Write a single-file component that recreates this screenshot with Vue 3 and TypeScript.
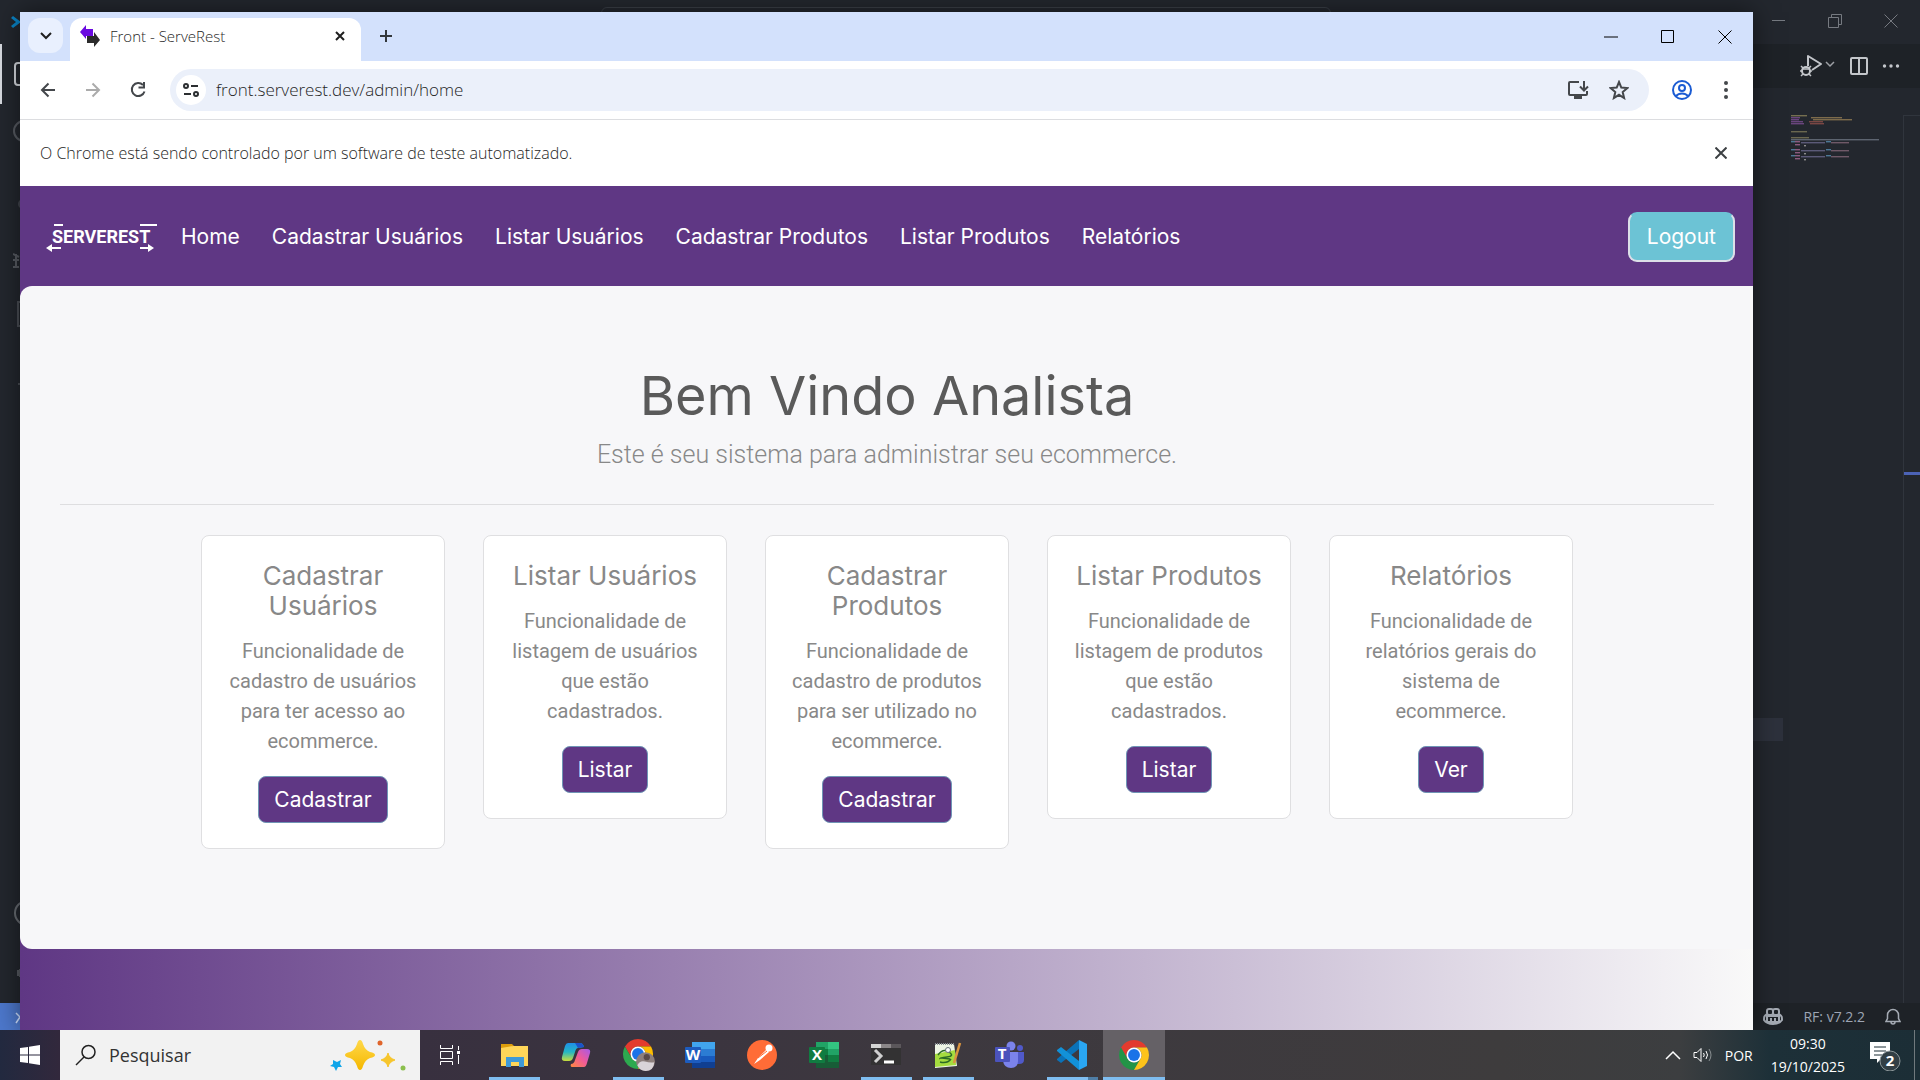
<script setup lang="ts">
import { ref } from 'vue'

interface Card {
  title: string
  text: string
  action: string
}

interface Mark {
  x: number
  y: number
  w: number
  c: string
}

const address = ref('front.serverest.dev/admin/home')
const query = ref('')

const links: string[] = [
  'Home',
  'Cadastrar Usuários',
  'Listar Usuários',
  'Cadastrar Produtos',
  'Listar Produtos',
  'Relatórios',
]

const cards: Card[] = [
  { title: 'Cadastrar Usuários', text: 'Funcionalidade de cadastro de usuários para ter acesso ao ecommerce.', action: 'Cadastrar' },
  { title: 'Listar Usuários', text: 'Funcionalidade de listagem de usuários que estão cadastrados.', action: 'Listar' },
  { title: 'Cadastrar Produtos', text: 'Funcionalidade de cadastro de produtos para ser utilizado no ecommerce.', action: 'Cadastrar' },
  { title: 'Listar Produtos', text: 'Funcionalidade de listagem de produtos que estão cadastrados.', action: 'Listar' },
  { title: 'Relatórios', text: 'Funcionalidade de relatórios gerais do sistema de ecommerce.', action: 'Ver' },
]

const block = (y: number): Mark[] => [
  { x: 0, y, w: 4, c: '#4d7896' },
  { x: 4, y, w: 5, c: '#8b5a80' },
  { x: 10, y: y + 1, w: 24, c: '#5b5a78' },
  { x: 35, y, w: 5, c: '#4d7896' },
  { x: 40, y: y + 1, w: 18, c: '#6f5968' },
  { x: 4, y: y + 3, w: 5, c: '#8b5a80' },
  { x: 13, y: y + 4, w: 2, c: '#8d8d8d' },
]

const marks: Mark[] = [
  { x: 0, y: 0, w: 16, c: '#756f50' },
  { x: 0, y: 2, w: 9, c: '#69457d' },
  { x: 20, y: 2, w: 31, c: '#7d6b4b' },
  { x: 0, y: 4, w: 8, c: '#69457d' },
  { x: 22, y: 4, w: 39, c: '#7d6b4b' },
  { x: 0, y: 6, w: 12, c: '#69457d' },
  { x: 18, y: 6, w: 14, c: '#7a4744' },
  { x: 0, y: 8, w: 13, c: '#69457d' },
  { x: 19, y: 8, w: 14, c: '#7a4744' },
  { x: 0, y: 16, w: 16, c: '#6a674f' },
  { x: 0, y: 22, w: 18, c: '#6a674f' },
  { x: 0, y: 24, w: 88, c: '#5d6470' },
  ...block(26),
  ...block(34),
  ...block(40),
]
</script>

<template>
  <div class="screen">
    <div class="desk">
      <div class="editor">
        <div class="ed-title">
          <svg class="ed-logo" width="20" height="20" viewBox="0 0 20 20"><path d="M1 6l2-2 8 6-8 6-2-2 5-4z" fill="#0a84c6" /><path d="M13 1l6 3v12l-6 3z" fill="#1f9cf0" /></svg>
          <div class="command"></div>
          <div class="ed-win">
            <svg width="14" height="14" viewBox="0 0 14 14"><path d="M0 6.500h13" stroke="#767a81" fill="none" /></svg>
            <svg width="14" height="14" viewBox="0 0 14 14"><path d="M.5 3.500h10v10h-10zM3.500 3.500v-3h10v10h-3" stroke="#767a81" fill="none" /></svg>
            <svg width="14" height="14" viewBox="0 0 14 14"><path d="M.5.5l13 13M13.500.5l-13 13" stroke="#767a81" fill="none" /></svg>
          </div>
        </div>
        <div class="ed-body">
          <div class="activity">
            <span class="current"><svg width="34" height="34" viewBox="0 0 34 34"><rect x="1" y="6" width="20" height="22" rx="3" stroke="#d7dae0" stroke-width="2" fill="none" /></svg></span>
            <span><svg width="34" height="34" viewBox="0 0 34 34"><circle cx="11" cy="14" r="10" stroke="#575b62" stroke-width="2" fill="none" /></svg></span>
            <span><svg width="34" height="34" viewBox="0 0 34 34"><circle cx="10" cy="27" r="4" stroke="#43474e" stroke-width="2" fill="none" /></svg></span>
            <span><svg width="34" height="34" viewBox="0 0 34 34"><path d="M0 23h6M0 30h6M0 17l6 3M3 17v13" stroke="#575b62" stroke-width="2" fill="none" /></svg></span>
            <span><svg width="34" height="34" viewBox="0 0 34 34"><rect x="5" y="5" width="24" height="24" stroke="#4a4e55" stroke-width="2" fill="none" /></svg></span>
            <span><svg width="34" height="34" viewBox="0 0 34 34"><path d="M5 27h8" stroke="#4a4e55" stroke-width="2" /></svg></span>
            <i></i>
            <span><svg width="34" height="34" viewBox="0 0 34 34"><circle cx="14" cy="17" r="12" stroke="#686c72" stroke-width="2" fill="none" /></svg></span>
            <span><svg width="34" height="34" viewBox="0 0 34 34"><path d="M5 14v6M7 14h4v6h-4z" stroke="#575b62" stroke-width="2" fill="none" /></svg></span>
          </div>
          <div class="ed-main">
            <div class="ed-tabs">
              <svg width="38" height="24" viewBox="0 0 38 24"><path d="M10 12V2l13 8-9 6" stroke="#c3c6ca" stroke-width="2" fill="none" stroke-linejoin="round" /><circle cx="8" cy="17" r="4" stroke="#c3c6ca" stroke-width="2" fill="none" /><path d="M4 15h8M3 12l2 2M13 12l-2 2M2 17h3M11 17h3M3 22l2-2M13 22l-2-2" stroke="#c3c6ca" stroke-width="1.500" fill="none" /><path d="M28 8l4 4 4-4" stroke="#9da0a5" stroke-width="1.500" fill="none" /></svg>
              <svg width="18" height="18" viewBox="0 0 18 18"><path d="M1 2a1 1 0 0 1 1-1h14a1 1 0 0 1 1 1v14a1 1 0 0 1-1 1H2a1 1 0 0 1-1-1zM9 1v16" stroke="#c3c6ca" stroke-width="2" fill="none" /></svg>
              <svg width="18" height="18" viewBox="0 0 18 18" fill="#c3c6ca"><circle cx="2.500" cy="9" r="1.700" /><circle cx="9" cy="9" r="1.700" /><circle cx="15.500" cy="9" r="1.700" /></svg>
            </div>
            <div class="ed-code">
              <div class="line-mark"></div>
              <svg class="minimap" width="90" height="50" viewBox="0 0 90 50">
                <rect v-for="(m, i) in marks" :key="i" :x="m.x" :y="m.y" :width="m.w" height="1.400" :fill="m.c" />
              </svg>
              <div class="ruler"><div></div></div>
            </div>
          </div>
        </div>
        <div class="ed-status">
          <div class="remote"><svg width="14" height="14" viewBox="0 0 14 14"><path d="M1 2l4 4-4 6" stroke="#cfe0ff" stroke-width="1.500" fill="none" /></svg></div>
          <div class="status-right">
            <svg width="20" height="18" viewBox="0 0 20 18" fill="none" stroke="#a5abb4" stroke-width="2"><rect x="4" y="1" width="6" height="6" rx="2" /><rect x="10" y="1" width="6" height="6" rx="2" /><path d="M4 6C1 8 1 9 1 12c2 3 5 4 9 4s7-1 9-4c0-3 0-4-3-6M4 8h12v6H4zM8 10v3M12 10v3" /></svg>
            <span>RF: v7.2.2</span>
            <svg width="16" height="18" viewBox="0 0 16 18" fill="none" stroke="#a5abb4" stroke-width="1.500"><path d="M1 13.500h14l-1.500-3V7a5.500 5.500 0 0 0-11 0v3.500zM6 14a2 2 0 0 0 4 0" /></svg>
          </div>
        </div>
      </div>

      <div class="window">
        <div class="tabstrip">
          <button class="tab-search" aria-label="Pesquisar guias"><svg width="12" height="8" viewBox="0 0 12 8"><path d="M1 1l5 5 5-5" stroke="#1f1f1f" stroke-width="2" fill="none" /></svg></button>
          <div class="tab">
            <svg width="20" height="22" viewBox="0 0 20 22"><path d="M0 7L6 0v4h7v7H6v3z" fill="#6a0ae0" /><path d="M7 11h7V7l6 8-6 7v-4H7z" fill="#2b2b2b" /></svg>
            <span>Front - ServeRest</span>
            <button aria-label="Fechar guia"><svg width="10" height="10" viewBox="0 0 10 10"><path d="M1 1l8 8M9 1L1 9" stroke="#1f1f1f" stroke-width="2" /></svg></button>
          </div>
          <button class="new-tab" aria-label="Nova guia"><svg width="14" height="14" viewBox="0 0 14 14"><path d="M7 1v12M1 7h12" stroke="#33373c" stroke-width="2" /></svg></button>
          <div class="win-controls">
            <button aria-label="Minimizar"><svg width="14" height="14" viewBox="0 0 14 14"><path d="M0 7h14" stroke="#000" /></svg></button>
            <button aria-label="Maximizar"><svg width="14" height="14" viewBox="0 0 14 14"><path d="M.5.5h12v12H.5z" stroke="#000" fill="none" /></svg></button>
            <button aria-label="Fechar"><svg width="14" height="14" viewBox="0 0 14 14"><path d="M.5.5l13 13M13.500.5l-13 13" stroke="#000" /></svg></button>
          </div>
        </div>

        <div class="toolbar">
          <button class="nav-btn" aria-label="Voltar"><svg width="16" height="16" viewBox="0 0 16 16"><path d="M15 8H2M8.500 1.500L2 8l6.500 6.500" stroke="#44474b" stroke-width="2" fill="none" /></svg></button>
          <button class="nav-btn" aria-label="Avançar"><svg width="16" height="16" viewBox="0 0 16 16"><path d="M1 8h13M7.500 1.500L14 8l-6.500 6.500" stroke="#ababab" stroke-width="2" fill="none" /></svg></button>
          <button class="nav-btn" aria-label="Recarregar"><svg width="18" height="18" viewBox="0 0 18 18"><path d="M14 4A6.500 6.500 0 1 0 15.500 10.500M15 1v5.500H9.500" stroke="#44474b" stroke-width="2" fill="none" /></svg></button>
          <div class="omnibox">
            <span class="site"><svg width="16" height="16" viewBox="0 0 16 16" fill="none" stroke="#2b2e31" stroke-width="2"><circle cx="3" cy="4" r="2" /><path d="M8 4h7M1 12h7" /><circle cx="13" cy="12" r="2" /></svg></span>
            <input v-model="address" type="text" aria-label="Endereço" />
            <svg width="22" height="20" viewBox="0 0 22 20" fill="none" stroke="#44474b" stroke-width="2"><path d="M12 2H3a1 1 0 0 0-1 1v11a1 1 0 0 0 1 1h16a1 1 0 0 0 1-1v-3M17 1v9M13 6.500l4 4 4-4" /><path d="M7 17.500h8" stroke-width="3" /></svg>
            <svg width="20" height="20" viewBox="0 0 20 20"><path d="M10 2l2.300 5.600 6 .5-4.600 4 1.400 5.900-5.100-3.200L4.900 18l1.400-5.900-4.600-4 6-.5z" fill="none" stroke="#44474b" stroke-width="2" /></svg>
          </div>
          <button class="profile" aria-label="Perfil"><svg width="20" height="20" viewBox="0 0 20 20" fill="none" stroke="#1a5bd3" stroke-width="2"><circle cx="10" cy="10" r="9" /><circle cx="10" cy="8" r="3" /><path d="M4 16c3-3.500 9-3.500 12 0" /></svg></button>
          <button class="kebab" aria-label="Menu"><svg width="4" height="18" viewBox="0 0 4 18" fill="#44474b"><circle cx="2" cy="2" r="2" /><circle cx="2" cy="9" r="2" /><circle cx="2" cy="16" r="2" /></svg></button>
        </div>

        <div class="infobar">
          <span>O Chrome está sendo controlado por um software de teste automatizado.</span>
          <button aria-label="Dispensar"><svg width="12" height="12" viewBox="0 0 12 12"><path d="M.5.5l11 11M11.500.5l-11 11" stroke="#3c4043" stroke-width="2" /></svg></button>
        </div>

        <div class="page">
          <nav class="navbar">
            <svg class="brand" width="112" height="30" viewBox="0 0 112 30" role="img" aria-label="SERVEREST">
              <text x="6" y="21">SERVEREST</text>
              <path d="M0 26l6-4v3h9v2H6v3zM108 26l-6-4v3h-8v2h8v3z" fill="#fff" />
              <path d="M94 2h17v2H94zM8 2h9v2H8z" fill="#fff" />
            </svg>
            <ul>
              <li v-for="l in links" :key="l"><a href="#">{{ l }}</a></li>
            </ul>
            <button class="logout">Logout</button>
          </nav>
          <main class="hero">
            <h1>Bem Vindo Analista</h1>
            <p class="lead">Este é seu sistema para administrar seu ecommerce.</p>
            <hr />
            <div class="cards">
              <article v-for="c in cards" :key="c.title" class="card">
                <h5>{{ c.title }}</h5>
                <p>{{ c.text }}</p>
                <button>{{ c.action }}</button>
              </article>
            </div>
          </main>
          <div class="fade"></div>
        </div>
      </div>
    </div>

    <footer class="taskbar">
      <button class="start" aria-label="Iniciar"><svg width="20" height="20" viewBox="0 0 20 20" fill="#fff"><path d="M0 3l8-1v7.500H0zM9 1.800L20 0v9.500H9zM0 10.500h8V18l-8-1zM9 10.500h11V20L9 18.200z" /></svg></button>
      <label class="search">
        <svg width="22" height="22" viewBox="0 0 22 22" fill="none" stroke="#222" stroke-width="1.500"><circle cx="13.500" cy="8" r="6.500" /><path d="M9 13l-8 8" /></svg>
        <input v-model="query" type="text" placeholder="Pesquisar" aria-label="Pesquisar" />
        <svg width="80" height="34" viewBox="0 0 80 34">
          <defs><linearGradient id="gold" x1="0" y1="0" x2="0" y2="1"><stop offset="0" stop-color="#ffd84a" /><stop offset="1" stop-color="#f5b800" /></linearGradient></defs>
          <path d="M31 2q2 0 3 4q2 6 7 8q5 1 5 3t-5 3q-5 2-7 8q-1 4-3 4t-3-4q-2-6-7-8q-5-1-5-3t5-3q5-2 7-8q1-4 3-4z" fill="url(#gold)" />
          <path d="M59 15q1 5 7 7q-6 2-7 7q-1-5-7-7q6-2 7-7z" fill="#f7c62d" stroke="#f7c62d" />
          <path d="M4 22l4 2 4-2-1 4 2 3-4 0-2 4-2-4-4-1 3-2z" fill="#0fa5e9" />
          <circle cx="51" cy="5" r="2.500" fill="#e0652b" /><circle cx="74" cy="30" r="2.500" fill="#8bbf4d" />
        </svg>
      </label>
      <button class="taskview" aria-label="Visão de tarefas"><svg width="20" height="20" viewBox="0 0 20 20" fill="none" stroke="#fff"><path d="M.5 0v3.500h12V0M.5 20v-3.500h12V20M.5 6.500h12v7H.5zM18.500 1v4M18.500 10v9" /><rect x="17" y="6" width="3" height="3" fill="#fff" stroke="none" /></svg></button>
      <div class="apps">
        <button class="open" aria-label="Explorador de Arquivos"><svg width="30" height="30" viewBox="0 0 30 30"><path d="M2 4h11l2 2h-2v4H2z" fill="#dd9d0c" /><path d="M2 8l12-2h15v20H2z" fill="#ffd659" /><path d="M7 27V17h18v10h-5v-5h-8v5z" fill="#3f9ad8" /></svg></button>
        <button aria-label="Copilot"><svg width="30" height="30" viewBox="0 0 30 30">
          <defs>
            <linearGradient id="cpa" x1="0" y1="0" x2="0" y2="1"><stop offset="0" stop-color="#1f8fe8" /><stop offset=".5" stop-color="#24b7c4" /><stop offset="1" stop-color="#c9dd3b" /></linearGradient>
            <linearGradient id="cpb" x1="0" y1="1" x2="1" y2="0"><stop offset="0" stop-color="#ff8b3d" /><stop offset=".5" stop-color="#f05a98" /><stop offset="1" stop-color="#a55ae8" /></linearGradient>
          </defs>
          <path d="M7 3h12q3 0 4 4l-6 1q-2 0-3 4l-2 6q-1 3-4 3H4q-4 0-3-4L4 6q1-3 3-3z" fill="url(#cpa)" />
          <path d="M14 3h5q3 0 4 4l-6 1z" fill="#1c52c8" />
          <path d="M23 27H11q-2 0-1-3 3 0 4-4l3-8q1-3 4-3h5q4 0 3 4l-3 10q-1 4-3 4z" fill="url(#cpb)" />
        </svg></button>
        <button class="open" aria-label="Chrome, perfil"><svg width="34" height="32" viewBox="-3 0 54 51"><path d="M24 12h20.780A24 24 0 0 0 3.216 12L13.608 30A12 12 0 0 1 24 12z" fill="#e33b2e" /><path d="M13.609 30.003L3.218 12.006A24 24 0 0 0 24.003 48L34.395 30.003A12 12 0 0 1 13.609 30.003z" fill="#2da94f" /><path d="M34.391 30.003L24 48A24 24 0 0 0 44.781 12H24A12 12 0 0 1 34.391 30.003z" fill="#fdbd00" /><circle cx="24" cy="24" r="12" fill="#fff" /><circle cx="24" cy="24" r="9.500" fill="#1a73e8" /><circle cx="36" cy="36" r="15" fill="#8d7f7d" /><path d="M23 42q4-8 12-6t15 1q-1 14-14 14-9 0-13-9z" fill="#d9d3d8" /><circle cx="38" cy="29" r="5" fill="#5a4a48" /></svg></button>
        <button aria-label="Word"><svg width="30" height="30" viewBox="0 0 30 30"><path d="M7 2h23v7H7z" fill="#41a5ee" /><path d="M7 9h23v7H7z" fill="#2b7cd3" /><path d="M7 16h23v6H7z" fill="#185abd" /><path d="M7 22h23v6H7z" fill="#103f91" /><rect x="0" y="7" width="16" height="16" rx="1" fill="#1d5cbe" /><text x="8" y="20" class="glyph">W</text></svg></button>
        <button aria-label="Postman"><svg width="30" height="30" viewBox="0 0 30 30"><circle cx="15" cy="15" r="15" fill="#ff6c37" /><circle cx="22" cy="8" r="3.500" fill="#fff" /><path d="M20 9l2 3-9 8-6 4 4-6z" fill="#fff" /><path d="M11 18l9-7" stroke="#ff6c37" /></svg></button>
        <button aria-label="Excel"><svg width="30" height="30" viewBox="0 0 30 30"><path d="M7 2h12v13H7z" fill="#21a366" /><path d="M19 2h11v7H19z" fill="#33c481" /><path d="M19 9h11v6H19z" fill="#21a366" /><path d="M7 15h12v13H7z" fill="#185c37" /><path d="M19 15h11v7H19z" fill="#107c41" /><path d="M19 22h11v6H19z" fill="#185c37" /><path d="M7 9h12v6H7z" fill="#107c41" /><rect x="0" y="7" width="16" height="16" rx="1" fill="#107c41" /><text x="8" y="20" class="glyph">X</text></svg></button>
        <button class="open" aria-label="Terminal"><svg width="30" height="30" viewBox="0 0 30 30"><path d="M0 8h30v17H0z" fill="#333233" /><path d="M0 4h10v4H0z" fill="#d4d4d4" /><path d="M10 4h10v4H10z" fill="#8b8789" /><path d="M20 4h10v4H20z" fill="#5b575b" /><path d="M4 10l6 6-6 6" stroke="#d0d0d0" stroke-width="3" fill="none" /><path d="M13 22h10" stroke="#fff" stroke-width="3" /></svg></button>
        <button class="open" aria-label="Notepad++"><svg width="30" height="30" viewBox="0 0 30 30"><path d="M2 4h19l3 22-22 2z" fill="#eef5e6" /><path d="M2 14l20-4 1 15-21 2z" fill="#a5dc3f" /><path d="M2 4h19" stroke="#8a9096" stroke-width="2" stroke-dasharray="1 1" /><path d="M5 15q5-7 11-3t-2 5-7 2M7 22q7 2 11-3M9 18l8 1" stroke="#2c6b25" stroke-width="1.500" fill="none" /><circle cx="15" cy="10" r="2.500" fill="#fff" stroke="#67727a" /><path d="M27 3l-6 20" stroke="#d9943f" stroke-width="2.500" /></svg></button>
        <button aria-label="Teams"><svg width="30" height="30" viewBox="0 0 30 30"><circle cx="25" cy="8" r="3" fill="#5059c9" /><path d="M20 12h9v8q0 4-5 4h-4z" fill="#5059c9" /><circle cx="16" cy="6" r="4.500" fill="#7b83eb" /><path d="M8 12h15v9q0 7-7 7t-8-7z" fill="#7b83eb" /><rect x="0" y="7" width="15" height="15" rx="1" fill="#4b53bc" /><text x="7" y="19" class="glyph">T</text></svg></button>
        <button class="open multi" aria-label="Visual Studio Code"><svg width="30" height="30" viewBox="0 0 30 30"><path d="M22 0v9L4 23l-4-3v-1z" fill="#0a72b8" /><path d="M22 30v-9L4 7 0 10v1z" fill="#1291d8" /><path d="M22 0l8 4v22l-8 4z" fill="#2aa6f2" /></svg></button>
        <button class="open active" aria-label="Google Chrome"><svg width="30" height="30" viewBox="0 0 48 48"><path d="M24 12h20.780A24 24 0 0 0 3.216 12L13.608 30A12 12 0 0 1 24 12z" fill="#e33b2e" /><path d="M13.609 30.003L3.218 12.006A24 24 0 0 0 24.003 48L34.395 30.003A12 12 0 0 1 13.609 30.003z" fill="#239447" /><path d="M34.391 30.003L24 48A24 24 0 0 0 44.781 12H24A12 12 0 0 1 34.391 30.003z" fill="#fdc31b" /><circle cx="24" cy="24" r="12" fill="#fff" /><circle cx="24" cy="24" r="9.500" fill="#1a73e8" /></svg></button>
      </div>
      <div class="tray">
        <svg width="16" height="10" viewBox="0 0 16 10"><path d="M1 9l7-7 7 7" stroke="#fff" stroke-width="1.500" fill="none" /></svg>
        <svg width="20" height="16" viewBox="0 0 20 16" fill="none" stroke="#fff"><path d="M1 5.500h3l4-4v13l-4-4H1zM10.500 6q1.500 2 0 4M13 4q3 4 0 8" /><path d="M16 2q4 6 0 12" stroke="#8a9092" /></svg>
        <span>POR</span>
        <div class="clock"><span>09:30</span><span>19/10/2025</span></div>
        <svg width="32" height="32" viewBox="0 0 32 32"><path d="M0 3h20v17h-9l-4 4v-4H0z" fill="#fff" /><path d="M4 8h12M4 12h12M4 16h8" stroke="#1d2f36" /><circle cx="20" cy="22" r="10" fill="#323f45" stroke="#8d979a" /><text x="20" y="27" class="glyph">2</text></svg>
        <div class="peek"></div>
      </div>
    </footer>
  </div>
</template>

<style>
body {
  margin: 0;
  background: #23272e;
}
</style>

<style scoped>
* {
  box-sizing: border-box;
}
button {
  border: 0;
  padding: 0;
  background: none;
  font: inherit;
  color: inherit;
  display: flex;
  align-items: center;
  justify-content: center;
}
input {
  border: 0;
  padding: 0;
  background: none;
  outline: 0;
  font: inherit;
  color: inherit;
  min-width: 0;
}
svg {
  display: block;
  flex: none;
}
.screen {
  min-height: 100vh;
  display: flex;
  flex-direction: column;
  font-family: "Open Sans", "Noto Sans", sans-serif;
}
.desk {
  flex: 1;
  position: relative;
  display: flex;
  overflow: hidden;
}
.editor {
  position: absolute;
  inset: 0;
  display: flex;
  flex-direction: column;
  background: #23272e;
}
.ed-title {
  height: 44px;
  display: flex;
  align-items: flex-start;
  justify-content: space-between;
}
.ed-logo {
  margin: 12px 0 0 10px;
}
.command {
  width: 730px;
  height: 30px;
  margin: 7px 0 0 130px;
  border: 1px solid #3a3f47;
  border-radius: 6px;
}
.ed-win {
  display: flex;
  gap: 42px;
  padding: 14px 22px 0 0;
}
.ed-body {
  flex: 1;
  display: flex;
}
.activity {
  width: 60px;
  display: flex;
  flex-direction: column;
}
.activity span {
  height: 60px;
  display: flex;
  align-items: center;
  justify-content: center;
}
.activity i {
  flex: 1;
}
.activity .current {
  border-left: 2px solid #d7dae0;
}
.ed-main {
  flex: 1;
  display: flex;
  flex-direction: column;
}
.ed-tabs {
  height: 44px;
  display: flex;
  align-items: center;
  justify-content: flex-end;
  gap: 14px;
  padding-right: 20px;
  background: #1e2227;
}
.ed-code {
  flex: 1;
  position: relative;
  display: flex;
  justify-content: flex-end;
  padding-top: 27px;
}
.line-mark {
  position: absolute;
  top: 630px;
  right: 137px;
  width: 60px;
  height: 23px;
  background: #2d313c;
}
.minimap {
  margin-right: 22px;
}
.ruler {
  width: 17px;
  border-left: 1px solid #30353d;
  border-top: 1px solid #30353d;
}
.ruler div {
  margin-top: 356px;
  height: 3px;
  background: #4c63b6;
}
.ed-status {
  height: 27px;
  display: flex;
  justify-content: space-between;
  background: #1e2227;
}
.remote {
  width: 40px;
  padding: 8px 0 0 15px;
  background: #4d78cc;
}
.status-right {
  display: flex;
  align-items: center;
  gap: 20px;
  padding-right: 19px;
  font-size: 14px;
  line-height: 20px;
  color: #9da5b4;
}
.window {
  position: relative;
  flex: 1;
  min-width: 0;
  margin: 12px 167px 0 20px;
  display: flex;
  flex-direction: column;
  background: #fff;
  box-shadow: 0 0 24px rgba(0, 0, 0, 0.5);
}
.tabstrip {
  height: 49px;
  display: flex;
  background: #d3e1fc;
}
.tab-search {
  width: 35px;
  height: 35px;
  margin: 6px 7px 0 8px;
  border-radius: 12px;
  background: #e9f0fe;
}
.tab {
  width: 291px;
  margin-top: 6px;
  padding: 0 16px 7px 10px;
  display: flex;
  align-items: center;
  border-radius: 12px 12px 0 0;
  background: #fff;
  font-size: 15px;
  font-weight: 300;
  line-height: 20px;
  color: #1f1f1f;
}
.tab span {
  flex: 1;
  padding-left: 10px;
}
.new-tab {
  width: 50px;
  height: 48px;
}
.win-controls {
  margin-left: auto;
  display: flex;
}
.win-controls button {
  width: 57px;
  height: 49px;
}
.toolbar {
  height: 59px;
  padding: 0 18px 0 5px;
  display: flex;
  align-items: center;
  border-bottom: 1px solid #dcdde0;
  border-radius: 12px 12px 0 0;
  background: #fff;
}
.tabstrip + .toolbar {
  box-shadow: 0 -12px 0 -12px #d3e1fc;
}
.nav-btn {
  width: 45px;
  height: 42px;
}
.omnibox {
  flex: 1;
  height: 42px;
  margin-left: 10px;
  padding: 0 20px 0 6px;
  display: flex;
  align-items: center;
  gap: 20px;
  border-radius: 21px;
  background: #ebf0fa;
  font-size: 17px;
  font-weight: 300;
  line-height: 24px;
  color: #1f1f1f;
}
.omnibox input {
  flex: 1;
  margin-left: -10px;
}
.site {
  width: 30px;
  height: 30px;
  display: flex;
  align-items: center;
  justify-content: center;
  border-radius: 50%;
  background: #fff;
}
.profile {
  width: 66px;
  height: 42px;
}
.kebab {
  width: 18px;
  height: 42px;
  margin-left: 2px;
}
.infobar {
  height: 66px;
  padding: 0 26px 0 20px;
  display: flex;
  align-items: center;
  justify-content: space-between;
  font-size: 16px;
  font-weight: 300;
  line-height: 20px;
  color: #1f1f1f;
}
.page {
  flex: 1;
  display: flex;
  flex-direction: column;
  background: linear-gradient(90deg, #5f3784, #f9f9f9);
}
.navbar {
  height: 100px;
  padding: 2px 18px 0 26px;
  display: flex;
  align-items: center;
  background: #5f3784;
  font-family: Inter, sans-serif;
  font-size: 21px;
  line-height: 30px;
  color: #fff;
}
.brand text {
  font: 700 18px Roboto, sans-serif;
  fill: #fff;
}
.navbar ul {
  flex: 1;
  margin: 0 0 0 23px;
  padding: 0;
  display: flex;
  gap: 32px;
  list-style: none;
}
.navbar a {
  color: #fff;
  text-decoration: none;
}
.logout {
  height: 50px;
  padding: 0 17px;
  border: 2px solid #dcdfe8;
  border-top-color: #6cc3d5;
  border-radius: 9px;
  background: #6cc3d5;
}
.hero {
  padding: 80px 39px 100px 40px;
  border-radius: 12px 0 0 12px;
  background: #f7f7f9;
  text-align: center;
}
h1 {
  margin: 0 0 10px;
  font: 400 54px/60px Inter, sans-serif;
  color: #5a5a5a;
}
.lead {
  margin: 0;
  font: 300 25px/38px Roboto, sans-serif;
  color: #888;
}
hr {
  margin: 30px 0;
  border: 0;
  border-top: 1px solid #dedee0;
}
.cards {
  padding: 0 141px;
  display: grid;
  grid-template-columns: repeat(5, minmax(0, 1fr));
  gap: 38px;
  align-items: start;
}
.card {
  padding: 25px;
  display: flex;
  flex-direction: column;
  align-items: center;
  border: 1px solid #dfdfe1;
  border-radius: 8px;
  background: #fff;
  color: #888;
}
.card h5 {
  margin: 0 0 15px;
  font: 400 26px/30px Inter, sans-serif;
}
.card p {
  margin: 0 0 20px;
  font: 400 20px/30px Roboto, sans-serif;
}
.card button {
  height: 47px;
  padding: 0 15px;
  border: 1px solid #6f95b5;
  border-radius: 8px;
  background: #5f3784;
  font: 400 21px/30px Inter, sans-serif;
  color: #fff;
}
.fade {
  flex: 1;
  min-height: 80px;
}
.taskbar {
  position: relative;
  height: 50px;
  display: flex;
  background: linear-gradient(90deg, #22293f 0, #32283c 60px, #38303f 420px, #3d383f 900px, #3e3c3d 1500px, #3c3e40 1680px, #1d3038 1770px, #1c2e36);
  color: #fff;
}
.start {
  width: 60px;
}
.search {
  width: 360px;
  padding: 0 11px 0 15px;
  display: flex;
  align-items: center;
  background: #f2f2f2;
  font-size: 18px;
  line-height: 24px;
}
.search input {
  flex: 1;
  margin-left: 12px;
  color: #333;
}
.search input::placeholder {
  color: #333;
  opacity: 1;
}
.taskview {
  width: 60px;
}
.apps {
  margin-left: 3px;
  display: flex;
}
.apps button {
  position: relative;
  width: 62px;
}
.open::after {
  content: "";
  position: absolute;
  left: 6px;
  right: 5px;
  bottom: 0;
  height: 3px;
  background: #7fbdf0;
}
.multi::after {
  background: linear-gradient(90deg, #7fbdf0 41px, #4f7ea6 41px);
}
.active {
  background: #656166;
}
.active::after {
  left: 0;
  right: 0;
}
.glyph {
  font: 700 15px "Open Sans", sans-serif;
  fill: #fff;
  text-anchor: middle;
}
.tray {
  margin-left: auto;
  display: flex;
  align-items: center;
  gap: 12px;
  font-size: 14px;
  line-height: 23px;
}
.clock {
  display: flex;
  flex-direction: column;
  align-items: center;
  margin: 0 13px 0 6px;
}
.peek {
  width: 6px;
  height: 50px;
  border-left: 1px solid #70797d;
}
</style>
